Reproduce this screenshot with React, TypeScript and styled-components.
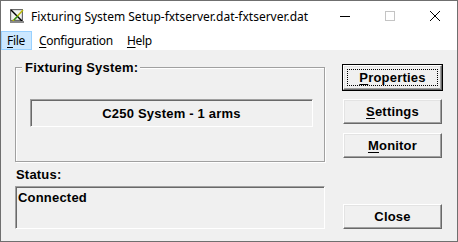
import React, { FC } from "react"
import styled, { createGlobalStyle, css } from "styled-components"

const GlobalStyle = createGlobalStyle`
  html, body {
    margin: 0;
    padding: 0;
    background: #ffffff;
  }
  * {
    box-sizing: border-box;
  }
`

const AppIcon: FC = () => (
  <svg width="16" height="16" viewBox="0 0 16 16">
    <rect x="1.5" y="1.5" width="12" height="11" fill="#d8d8d8" stroke="#6a6a6a" />
    <rect x="3" y="3" width="9" height="8" fill="#eef2f2" />
    <path d="M2 2 L13 13" stroke="#000" strokeWidth="1.4" />
    <path d="M3 14 L14 2" stroke="#b8b800" strokeWidth="1.4" />
    <path d="M5 12 L9 8" stroke="#2a8a2a" strokeWidth="1.2" />
    <rect x="1" y="13" width="14" height="2" fill="#8a8a8a" />
  </svg>
)

const MinimizeIcon: FC = () => (
  <svg width="10" height="10" viewBox="0 0 10 10">
    <path d="M0 5.5 H10" stroke="#000" strokeWidth="1" />
  </svg>
)

const MaximizeIcon: FC = () => (
  <svg width="10" height="10" viewBox="0 0 10 10">
    <rect x="0.5" y="0.5" width="9" height="9" fill="none" stroke="#c4c4c4" strokeWidth="1" />
  </svg>
)

const CloseIcon: FC = () => (
  <svg width="10" height="10" viewBox="0 0 10 10">
    <path d="M0 0 L10 10 M10 0 L0 10" stroke="#000" strokeWidth="1" />
  </svg>
)

const Mnemonic: FC<{ text: string }> = ({ text }) => (
  <>
    <u>{text[0]}</u>
    {text.slice(1)}
  </>
)

export default function App() {
  return (
    <>
      <GlobalStyle />
      <Window>
        <TitleBar>
          <TitleIcon>
            <AppIcon />
          </TitleIcon>
          <TitleText>Fixturing System Setup-fxtserver.dat-fxtserver.dat</TitleText>
          <Controls>
            <ControlButton>
              <MinimizeIcon />
            </ControlButton>
            <ControlButton>
              <MaximizeIcon />
            </ControlButton>
            <ControlButton>
              <CloseIcon />
            </ControlButton>
          </Controls>
        </TitleBar>
        <MenuBar>
          <MenuItem active>
            <Mnemonic text="File" />
          </MenuItem>
          <MenuItem>
            <Mnemonic text="Configuration" />
          </MenuItem>
          <MenuItem>
            <Mnemonic text="Help" />
          </MenuItem>
        </MenuBar>
        <Client>
          <LeftColumn>
            <GroupBox>
              <Legend>Fixturing System:</Legend>
              <SystemField>C250 System - 1 arms</SystemField>
            </GroupBox>
            <Label>Status:</Label>
            <StatusField>Connected</StatusField>
          </LeftColumn>
          <RightColumn>
            <Button isDefault>
              <FocusRect>
                <Mnemonic text="Properties" />
              </FocusRect>
            </Button>
            <Button>
              <Mnemonic text="Settings" />
            </Button>
            <Button>
              <Mnemonic text="Monitor" />
            </Button>
            <Spacer />
            <Button>Close</Button>
          </RightColumn>
        </Client>
      </Window>
    </>
  )
}

//---------------------------STYLES-------------------------------------------//

const dialogFont = css`
  font-family: "Liberation Sans", Arial, sans-serif;
  font-weight: 700;
  font-size: 13px;
  letter-spacing: 0.2px;
  color: #000;
`

const Window = styled.div`
  width: 458px;
  height: 242px;
  border: 1px solid #6f6f6f;
  display: flex;
  flex-direction: column;
  background: #f0f0f0;
  overflow: hidden;
`

const TitleBar = styled.div`
  height: 30px;
  background: #fff;
  display: flex;
  align-items: center;
  padding-left: 8px;
`

const TitleIcon = styled.div`
  width: 16px;
  height: 16px;
  display: flex;
`

const TitleText = styled.div`
  margin-left: 6px;
  font-family: "Noto Sans", "Open Sans", sans-serif;
  font-size: 12px;
  color: #000;
  flex: 1;
  white-space: nowrap;
`

const Controls = styled.div`
  display: flex;
  height: 100%;
`

const ControlButton = styled.div`
  width: 45px;
  height: 100%;
  display: flex;
  align-items: center;
  justify-content: center;
`

const MenuBar = styled.div`
  height: 19px;
  background: #fff;
  display: flex;
  align-items: stretch;
`

interface MenuProps {
  active?: boolean
}

const MenuItem = styled.div<MenuProps>`
  display: flex;
  align-items: center;
  padding: 0 6px 0 5px;
  margin-right: 1px;
  font-family: "Noto Sans", "Open Sans", sans-serif;
  font-size: 12px;
  letter-spacing: -0.3px;
  color: #000;
  border: 1px solid ${props => (props.active ? "#99d1ff" : "transparent")};
  background: ${props => (props.active ? "#cce8ff" : "transparent")};
  u {
    text-decoration-thickness: 1px;
    text-underline-offset: 2px;
  }
`

const Client = styled.div`
  flex: 1;
  display: grid;
  grid-template-columns: 310px 99px;
  column-gap: 18px;
  padding: 0 0 0 14px;
`

const LeftColumn = styled.div`
  display: flex;
  flex-direction: column;
`

const GroupBox = styled.div`
  margin-top: 17px;
  height: 95px;
  border: 1px solid #a0a0a0;
  box-shadow: inset 1px 1px 0 #fff, 1px 1px 0 #fff;
  display: flex;
  flex-direction: column;
  padding: 0 11px 0 14px;
`

const Legend = styled.div`
  ${dialogFont};
  align-self: flex-start;
  margin: -8px 0 0 -8px;
  padding: 0 2px 0 3px;
  line-height: 15px;
  background: #f0f0f0;
`

const sunken = css`
  border-top: 1px solid #a0a0a0;
  border-left: 1px solid #a0a0a0;
  border-right: 1px solid #fff;
  border-bottom: 1px solid #fff;
  box-shadow: inset 1px 1px 0 #696969;
`

const SystemField = styled.div`
  ${dialogFont};
  ${sunken};
  margin-top: 24px;
  height: 28px;
  display: flex;
  align-items: center;
  justify-content: center;
`

const Label = styled.div`
  ${dialogFont};
  margin: 5px 0 0 1px;
  line-height: 15px;
`

const StatusField = styled.div`
  ${dialogFont};
  ${sunken};
  margin-top: 4px;
  height: 43px;
  padding: 3px 0 0 2px;
  line-height: 15px;
`

const RightColumn = styled.div`
  display: flex;
  flex-direction: column;
  gap: 9px;
  padding-top: 15px;
  padding-bottom: 12px;
`

const Spacer = styled.div`
  flex: 1;
`

interface ButtonProps {
  isDefault?: boolean
}

const Button = styled.div<ButtonProps>`
  ${dialogFont};
  height: 25px;
  display: flex;
  align-items: center;
  justify-content: center;
  background: #f0f0f0;
  border-top: 1px solid #fff;
  border-left: 1px solid #fff;
  border-right: 1px solid #696969;
  border-bottom: 1px solid #696969;
  box-shadow: inset -1px -1px 0 #a0a0a0, inset 1px 1px 0 #e3e3e3;
  ${props =>
    props.isDefault &&
    css`
      outline: 1px solid #000;
    `}
  u {
    text-decoration-thickness: 1px;
    text-underline-offset: 2px;
  }
`

const FocusRect = styled.div`
  flex: 1;
  align-self: stretch;
  margin: 3px;
  border: 1px dotted #000;
  display: flex;
  align-items: center;
  justify-content: center;
`
